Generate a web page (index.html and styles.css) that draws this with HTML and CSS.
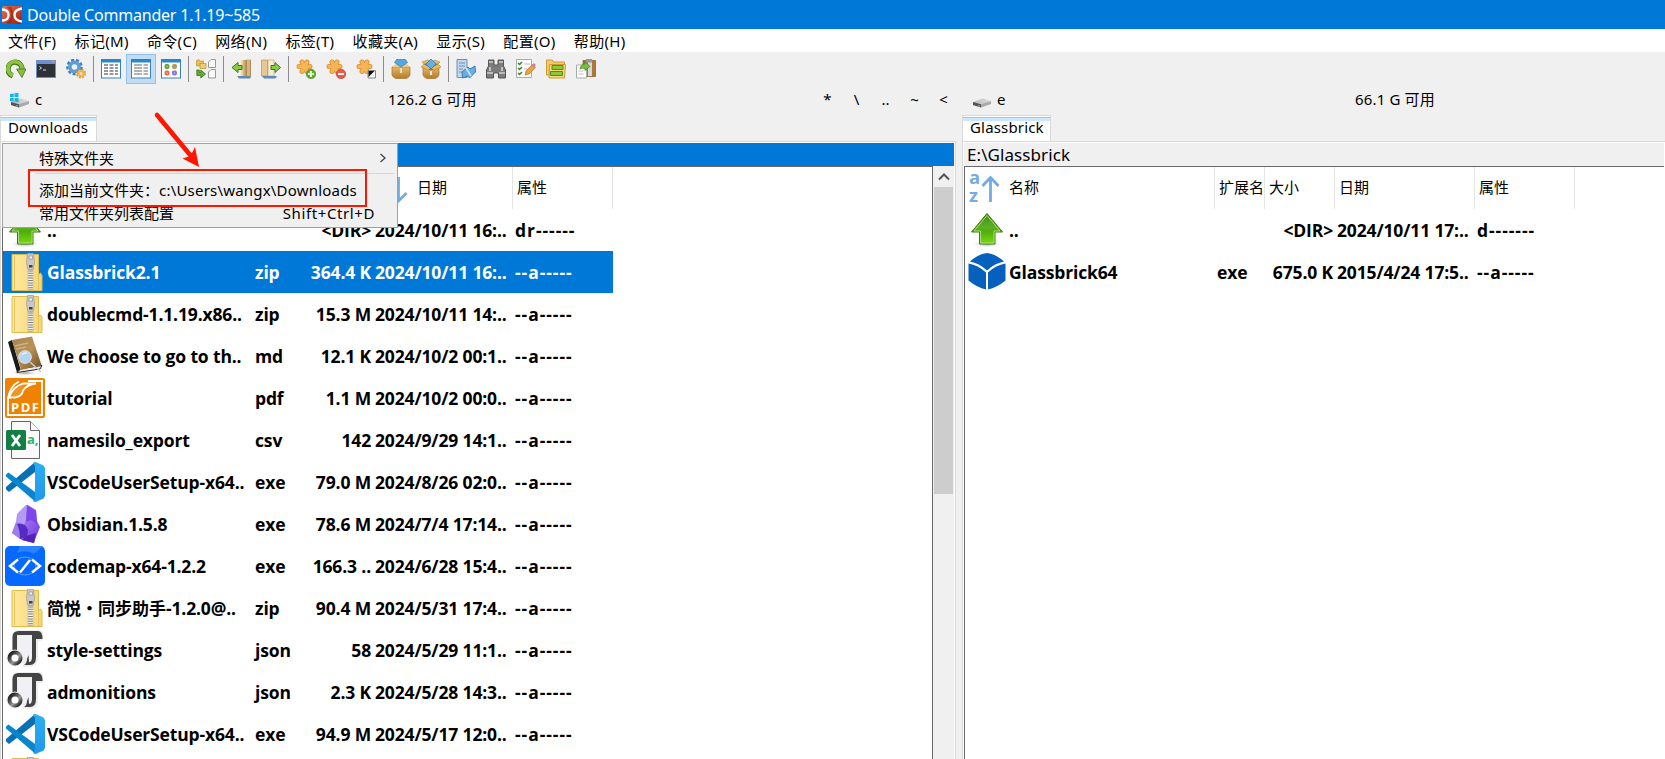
FILE: index.html
```html
<!DOCTYPE html>
<html lang="zh-CN">
<head>
<meta charset="utf-8">
<title>Double Commander 1.1.19~585</title>
<link rel="stylesheet" href="styles.css">
</head>
<body>
<svg class="defs" aria-hidden="true">
  <defs>
    <linearGradient id="gUp" x1="0" y1="0" x2="0" y2="1"><stop offset="0" stop-color="#3f8f08"/><stop offset=".45" stop-color="#5fae28"/><stop offset=".6" stop-color="#4fae0a"/><stop offset="1" stop-color="#7ada10"/></linearGradient>
    <linearGradient id="gLogo" x1="0" y1="0" x2="1" y2="1"><stop offset="0" stop-color="#e4735a"/><stop offset="1" stop-color="#a81808"/></linearGradient>
    <linearGradient id="gZip" x1="0" y1="0" x2="1" y2="0"><stop offset="0" stop-color="#ffe9a0"/><stop offset="1" stop-color="#f6d673"/></linearGradient>
    <linearGradient id="gBook" x1="0" y1="0" x2="1" y2="1"><stop offset="0" stop-color="#a8834c"/><stop offset=".5" stop-color="#b89358"/><stop offset="1" stop-color="#6f4e20"/></linearGradient>
    <linearGradient id="gObs" x1="0" y1="0" x2="1" y2="1"><stop offset="0" stop-color="#c0a8f8"/><stop offset="1" stop-color="#6c31e3"/></linearGradient>
    <linearGradient id="gVs" x1="0" y1="0" x2="0" y2="1"><stop offset="0" stop-color="#2bb0f2"/><stop offset="1" stop-color="#2196ea"/></linearGradient>
    <linearGradient id="gDisk" x1="0" y1="0" x2="1" y2="0"><stop offset="0" stop-color="#b8b8b8"/><stop offset="1" stop-color="#dedede"/></linearGradient>
    <linearGradient id="gBox" x1="0" y1="0" x2="0" y2="1"><stop offset="0" stop-color="#e6b868"/><stop offset="1" stop-color="#b47a28"/></linearGradient>
    <linearGradient id="gBind" x1="0" y1="0" x2="1" y2="0"><stop offset="0" stop-color="#fff3d8"/><stop offset="1" stop-color="#b98f52"/></linearGradient>
    <linearGradient id="gRing" x1="0" y1="0" x2="1" y2="1"><stop offset="0" stop-color="#111"/><stop offset=".35" stop-color="#555"/><stop offset=".6" stop-color="#999"/><stop offset="1" stop-color="#111"/></linearGradient>
    <radialGradient id="gShade"><stop offset="0" stop-color="#999"/><stop offset="1" stop-color="#fff" stop-opacity="0"/></radialGradient>

    <symbol id="zip" viewBox="0 0 40 40">
      <path d="M7 2.500h26.500v20l2 -1.500 1.500 2.500v15H7z" fill="url(#gZip)" stroke="#e0bb48"/>
      <path d="M33.500 23v15M9.500 4v33" stroke="#e9c65c" fill="none"/>
      <path d="M22.500 3h6v35h-6z" fill="#e2c070"/>
      <path d="M25.500 16v22" stroke="#f4f4f4" stroke-width="4.500"/>
      <path d="M25.500 16v22" stroke="#777" stroke-width="4.500" stroke-dasharray="1 1.400"/>
      <path d="M22.500 1.500h6l1 9-1.500 7h-5l-1.500-7z" fill="#c8c8c8" stroke="#999" stroke-width=".7"/>
      <path d="M24 4h3.500v3H24z" fill="#eee" stroke="#888" stroke-width=".6"/><path d="M24 13h3.500v2.500H24z" fill="#444"/>
    </symbol>
    <symbol id="book" viewBox="0 0 40 40">
      <ellipse cx="20" cy="37" rx="16" ry="3" fill="url(#gShade)"/>
      <path d="M3 6l4-2 9 31-4 1.500z" fill="#1d1a19"/>
      <path d="M12 36.500l4-4 21-3-2 3.500z" fill="#eee" stroke="#2a2117"/>
      <path d="M7 4l20-3.500L36.500 29 16 34z" fill="url(#gBook)"/>
      <path d="M10 10l13-3M11 13l10-2" stroke="#cdb28a" stroke-width="1.500"/>
      <circle cx="20" cy="21" r="6.300" fill="#b5d5f5" stroke="#dfe7ee"/>
      <path d="M25 26l11 10" stroke="#c8c8c8" stroke-width="1.600"/><path d="M16 19q2-4 7-2z" fill="#edf6ff"/>
    </symbol>
    <symbol id="pdf" viewBox="0 0 40 40">
      <rect width="40" height="40" rx="2" fill="#ef8200"/>
      <path d="M23 3h14v34H3V20Q5 8 14 3.500M10 19.500q7-1 8-7 4-6 13-7H18Q7 9 4 20q2-1 6-.5z" fill="none" stroke="#fff" stroke-width="1.800"/>
      <path d="M4 21Q7 10 18 5l3-1-4 8q-1 7-13 9z" fill="#fff" opacity=".15"/>
      <text x="6" y="33.500" class="pdf-label" textLength="28">PDF</text>
    </symbol>
    <symbol id="csv" viewBox="0 0 40 40">
      <path d="M6.500 1.500H25.500l9 9v28H6.500z" fill="#fafafa" stroke="#666"/>
      <path d="M25.500 1.500v9h9" fill="#fff" stroke="#666"/>
      <rect x="1" y="10" width="20" height="20" rx="1.500" fill="#128045"/>
      <path d="M7 15l8 11M15 15L7 26" stroke="#fff" stroke-width="2.800"/>
      <text x="22" y="24" class="csv-label">a,</text>
    </symbol>
    <symbol id="vscode" viewBox="0 0 40 40">
      <path d="M1 27.500l3 2.500 26-20V0L1 25z" fill="#0670b4"/>
      <path d="M1 14.500L1 12.500 3.500 10.500 30 30v9.500z" fill="#0a86d0"/>
      <path d="M28 .8L30.500 0 38.500 3.500 40 6v28l-1.500 2.500-8 3.500-2.500-.8 2-3V4z" fill="url(#gVs)"/>
    </symbol>
    <symbol id="obsidian" viewBox="0 0 40 40">
      <path d="M18 4l3-3 2 0 8 5 1 11 3 6-4 10-2 6-12-3-10-7 4-10 1-9z" fill="url(#gObs)"/>
      <path d="M18 4l4-3-1 15-2 5-7-2 .5-9z" fill="#b49af5"/>
      <path d="M22 1l9 6 1 13-6-4-5 2z" fill="#7c46e9"/>
      <path d="M11 20q9-2 12 6l-1 7-7 2-4-7z" fill="#562bc4"/>
      <path d="M21 32l10-3-2 10-12-3z" fill="#5523b8"/>
      <path d="M11 18l-4 11 8 6q0-10-4-17z" fill="#9d7df0"/>
    </symbol>
    <symbol id="codemap" viewBox="0 0 40 40">
      <rect width="40" height="40" rx="5" fill="#0569ff"/><path d="M15 0h23l-9 8Q21 3 12 7z" fill="#2b83ff"/>
      <ellipse cx="20" cy="20" rx="11" ry="9" fill="none" stroke="#5b9dff"/>
      <path d="M13 13.500L5 20l8 6.500M27 13.500l8 6.500-8 6.500M25 14L15 26.500" fill="none" stroke="#fff" stroke-width="2.500"/>
    </symbol>
    <symbol id="json" viewBox="0 0 40 40">
      <path d="M10 22V8q0-5 5-5h20v5h-5v20q0 6-5 6H18" fill="#f1f1f5" stroke="#ededed" stroke-width="6" stroke-linejoin="round"/>
      <path d="M7.500 21V7q0-6 6-6H33q4.500 0 4.500 8H31v18q0 8-6 8h-6q3-2 3-6l1.500-4 .5 7q3 0 3-5V5H12v16z" fill="#444"/>
      <circle cx="10" cy="28" r="5.600" fill="#fff" stroke="#eee" stroke-width="6"/>
      <circle cx="10" cy="28" r="5.500" fill="#fff" stroke="url(#gRing)" stroke-width="4"/>
    </symbol>
    <symbol id="up" viewBox="0 0 40 40">
      <ellipse cx="20" cy="34" rx="16" ry="4" fill="url(#gShade)"/>
      <path d="M20 3.500L35.500 22H28v12H12.500V22H4.500z" fill="url(#gUp)" stroke="#3a7d0c"/>
      <path d="M20 5.500L33 21h-6v12H13.500V21H7z" fill="none" stroke="#a9dc7a"/>
    </symbol>
    <symbol id="cube" viewBox="0 0 40 40">
      <path d="M3 9.500Q11 2 20 1q9 1 17 8.500Q28 11 20 18.500 12 11 3 9.500z" fill="#0560be"/>
      <path d="M1.500 11.500Q11 13 19 20.500V37.500q-9-2-17.500-9zM38.500 11.500Q29 13 21 20.500V37.500q9-2 17.500-9z" fill="#0560be"/>
    </symbol>
    <symbol id="sortup" viewBox="0 0 40 40"><text x="4" y="15.500" class="sort-label">a</text><text x="4" y="33.500" class="sort-label">z</text><path d="M25.500 34V10M17.500 18l8-8.500 8 8.500" fill="none" stroke="#77abdf" stroke-width="2.800"/></symbol>
    <symbol id="sortdown" viewBox="0 0 40 40"><path d="M25.500 9v24M17.500 25l8 8 8-8" fill="none" stroke="#77abdf" stroke-width="2.800"/></symbol>

    <symbol id="disk" viewBox="0 0 20 16"><path d="M1 10l10-3.500 8 2.500v3L9 15.500 1 13z" fill="url(#gDisk)"/><path d="M1 10l8 2.300V15.500L1 13z" fill="#555"/><path d="M9 12.300L19 9v3L9 15.500z" fill="#aaa"/><path d="M6 13.600l2 .5" stroke="#4ee06a"/></symbol>
    <symbol id="win" viewBox="0 0 20 16"><path d="M0 2l3.700-.6V5H0zM4.500 1.300L8.500.7V5h-4zM0 5.900h3.700v3.600L0 9zM4.500 5.900h4v4.300l-4-.6z" fill="#12b5ef"/></symbol>

    <symbol id="refresh" viewBox="0 0 20 20"><path d="M6.800 16.800A7 7 0 1 1 16 10.500" fill="none" stroke="#44731a" stroke-width="5.400"/><path d="M6.800 16.400A7 7 0 1 1 16 10.500" fill="none" stroke="#8cc43f" stroke-width="3.800"/><path d="M10.500 10h9.500l-4 8.500z" fill="#86c03c" stroke="#44731a" stroke-width=".8"/></symbol>
    <symbol id="term" viewBox="0 0 20 20"><rect y="1" width="20" height="18" fill="#6c8fc7"/><path d="M0 1h20v4H0z" fill="#6d8fca"/><path d="M15 2.500h4" stroke="#e9856b" stroke-width="1.500"/><path d="M1 5h18v13H1z" fill="#2d3138"/><path d="M3.500 7.500l2 1.500-2 1.500M7 11h3" fill="none" stroke="#ddd"/></symbol>
    <symbol id="gears" viewBox="0 0 20 20"><circle cx="8.500" cy="8" r="7" fill="none" stroke="#3f7fbd" stroke-width="2.600" stroke-dasharray="3 1.890"/><circle cx="8.500" cy="8" r="4.600" fill="none" stroke="#5e9dd6" stroke-width="3.600"/><circle cx="15" cy="14.500" r="4" fill="none" stroke="#d8932b" stroke-width="2" stroke-dasharray="1.900 1.240"/><circle cx="15" cy="14.500" r="2.600" fill="#f7e8c5" stroke="#eeb44e" stroke-width="2.200"/></symbol>
    <symbol id="list1" viewBox="0 0 20 20"><rect x=".5" y=".5" width="19" height="18.500" fill="#fff" stroke="#3482bd"/><path d="M1 1h18v2.500H1z" fill="#2788d0"/><path d="M3 6h4M8.500 6h4M14 6h3M3 9h4M8.500 9h4M14 9h3M3 12h4M8.500 12h4M14 12h3M3 15h4M8.500 15h4M14 15h3" stroke="#777" stroke-width="1.300"/></symbol>
    <symbol id="list2" viewBox="0 0 20 20"><rect x=".5" y=".5" width="19" height="18.500" fill="#fff" stroke="#3482bd"/><path d="M1 1h18v2.500H1z" fill="#2788d0"/><path d="M3 6h8M3 9h8M3 12h8M3 15h8M12.500 6H17M12.500 9H17M12.500 12H17M12.500 15H17" stroke="#999" stroke-width="1.300"/></symbol>
    <symbol id="thumbs" viewBox="0 0 20 20"><rect x=".5" y=".5" width="19" height="18.500" fill="#fff" stroke="#3482bd"/><path d="M1 1h18v2.500H1z" fill="#2788d0"/><g stroke-width="1.800"><rect x="4.400" y="5.900" width="3.200" height="3.200" rx="1" fill="#b9d79a" stroke="#5e9e3b"/><rect x="11.900" y="5.900" width="3.200" height="3.200" rx="1" fill="#6e9ce0" stroke="#c09a35"/><rect x="4.400" y="12.400" width="3.200" height="3.200" rx="1" fill="#f6b09a" stroke="#ee6a45"/><rect x="11.900" y="12.400" width="3.200" height="3.200" rx="1" fill="#c7a8f0" stroke="#9070e0"/></g></symbol>
    <symbol id="tree" viewBox="0 0 20 20"><path d="M.5 1.500l2-1 2 1.500h3v5H.5z" fill="#e8be57" stroke="#bd922e" stroke-width=".7"/><path d="M4 4.500h6v5H4z" fill="#efcd72" stroke="#bd922e" stroke-width=".7"/><path d="M.8 11v5.500h4V19l4.700-4L4.800 11v2.500H3.300V11z" fill="#65ad31" stroke="#34751a" stroke-width=".8"/><path d="M12.500 3l2.500-2.500h4.500v8h-7zM12.500 13l2.500-2.500h4.500v8.500h-7z" fill="#f8f8f8" stroke="#999"/></symbol>
    <symbol id="binder" viewBox="0 0 20 20"><path d="M9 1h6v16H9z" fill="url(#gBind)"/><path d="M15 .5h5V18h-5z" fill="#d3b587"/><path d="M15.500 1v16M19.500 1v16" stroke="#b08a50"/><path d="M6 17h13l1 1-1 1.500H8z" fill="#6189b5"/></symbol>
    <symbol id="left" viewBox="0 0 20 20"><use href="#binder"/><path d="M1 8.500L7 3.500V6.500h4v4H7v3z" fill="#8acb49" stroke="#3c771c"/></symbol>
    <symbol id="right" viewBox="0 0 20 20"><path d="M.5 1h6v16h-6z" fill="#e7c893" stroke="#b98f52" stroke-width=".7"/><path d="M7 1h6v16H7z" fill="#f7ecd4" stroke="#c9a870" stroke-width=".7"/><path d="M1 17h14l1 1-2 1.500H3z" fill="#6189b5"/><path d="M19.500 8.500L14 3.500V6.500h-4v4h4v3z" fill="#8acb49" stroke="#3c771c"/></symbol>
    <symbol id="star" viewBox="0 0 20 20"><g fill="none" stroke="#dd9236" stroke-width="5" stroke-linecap="round"><path d="M3 7.500h11M6 3l5 9.500M11 3l-5 9.500"/></g><g fill="none" stroke="#f5b556" stroke-width="3.400" stroke-linecap="round"><path d="M3 7.500h11M6 3l5 9.500M11 3l-5 9.500"/></g></symbol>
    <symbol id="add" viewBox="0 0 20 20"><use href="#star"/><circle cx="15" cy="15" r="4.700" fill="#63ac2b" stroke="#478a18" stroke-width=".7"/><path d="M12 15h6M15 12v6" stroke="#fff" stroke-width="1.700"/></symbol>
    <symbol id="minus" viewBox="0 0 20 20"><use href="#star"/><circle cx="15" cy="15" r="4.700" fill="#e85a48" stroke="#c5382c" stroke-width=".7"/><path d="M12 15h6" stroke="#fff" stroke-width="1.900"/></symbol>
    <symbol id="invert" viewBox="0 0 20 20"><use href="#star"/><path d="M12 11.500h7.500v7.500H12z" fill="#f4f4f4" stroke="#888"/><path d="M12.500 12h6l-6 6z" fill="#111"/></symbol>
    <symbol id="pack" viewBox="0 0 20 20"><path d="M1 8h18v8q-1 3-4 3.500H5Q2 19 1 16z" fill="url(#gBox)" stroke="#a8772f" stroke-width=".7"/><path d="M1 8l4-3h11l3 3" fill="#efcb8b"/><path d="M10 9v5" stroke="#e9ddc4" stroke-width="2"/><path d="M10 8L3.500 3.500 6 0h8l2.500 3.500z" fill="#55a7df" stroke="#317bb4" stroke-width=".7"/></symbol>
    <symbol id="unpack" viewBox="0 0 20 20"><path d="M2 8h16v8q-1 3-4 3.500H6Q3 19 2 16z" fill="url(#gBox)" stroke="#a8772f" stroke-width=".7"/><path d="M3 5l7-2 7 2v4l-7 2-7-2z" fill="#8c5f22"/><path d="M3 5L0 8l7 3 3-2zM17 5l3 3-7 3-3-2zM3 5L1 3l6-2 3 2zM17 5l2-2-6-2-3 2z" fill="#e6b868" stroke="#a8772f" stroke-width=".5"/><path d="M10 0l5 5-5 5-5-5z" fill="#62b0e5" stroke="#317bb4" stroke-width=".7"/><path d="M10 12v4" stroke="#eee" stroke-width="2"/></symbol>
    <symbol id="doc" viewBox="0 0 20 20"><path d="M1 .5h10v18H1z" fill="#c3d5e8" stroke="#6f91b7"/><path d="M3 4h6M3 7h6M3 10h4M3 13h3" stroke="#7194bb" stroke-width="1.200"/><path d="M6 13l6-5 2 2 5-3 .5 6-6 6-2-2-5 2z" fill="#69aee5" stroke="#367abb"/><path d="M10 9l5 8" stroke="#d5e9fa" stroke-width="1.500"/></symbol>
    <symbol id="bino" viewBox="0 0 20 20"><path d="M2.500 1H8v5h4V1h5.500v6l2 4v8h-7v-5h-5v5h-7v-8l2-4z" fill="#7b7b7b" stroke="#555"/><path d="M3 3h4M13 3h4M1 14h6M13 14h6M4 8v4M16 8v4" stroke="#d0d0d0" stroke-width="1.700"/></symbol>
    <symbol id="check" viewBox="0 0 20 20"><path d="M.5.500h15v18H.5z" fill="#fff" stroke="#aaa"/><path d="M2 4l1.500 1.500L6 3M2 9l1.500 1.500L6 8M2 14l1.500 1.500L6 13" fill="none" stroke="#38852a" stroke-width="1.500"/><path d="M8 5h6M8 10h3" stroke="#bbb"/><path d="M9 16l1-4 6.500-6.500 3 3L13 15z" fill="#eda33c" stroke="#b37022" stroke-width=".7"/><path d="M15.500 6.500L18 4l2 2-2.500 2.500z" fill="#cc80b8"/></symbol>
    <symbol id="folder" viewBox="0 0 20 20"><path d="M.5 1h6l1 2h11v13H.5z" fill="#f0ca6c" stroke="#d09a32"/><path d="M3.500 5.500h16l-1 13.500H3z" fill="#f6d884" stroke="#d09a32"/><path d="M6 6.500h11v4H6zM4.500 12.500h12v4h-12z" fill="#8cc832" stroke="#4f8f1d"/></symbol>
    <symbol id="paste" viewBox="0 0 20 20"><path d="M7 1.500h12.500v16H7z" fill="#ae783d" stroke="#865624" stroke-width=".7"/><path d="M12 2h4v15h-4z" fill="#d8d8d8"/><path d="M10 0h6v3.500h-6z" fill="#999"/><path d="M.5 6h10v13H.5z" fill="#fff" stroke="#aaa"/><path d="M2.500 12h5M2.500 15h5" stroke="#bbb"/><path d="M4 10q1-5 5-5V2.500l5 5-5 4V9.500q-3-1-5 .5z" fill="#79bf37" stroke="#3d8018" stroke-width=".7"/></symbol>
  </defs>
</svg>

<header class="titlebar">
  <svg class="logo" viewBox="0 0 20 18"><rect width="20" height="18" rx="2" fill="url(#gLogo)"/><path d="M9.500 1Q6 0 4.500 1 9 4 9 9t-4.500 8q2 1 5 0Q11 13 11 9T9.500 1z" fill="#8f1e10" opacity=".55"/><path d="M0 3.500q6.500 0 6.500 5.500T0 14.500M20 2.500q-7.500 1-7.500 6.500t7.500 6.500" fill="none" stroke="#fff" stroke-width="2.300"/></svg>
  <span class="title-text">Double Commander 1.1.19~585</span>
</header>
<nav class="menubar"><span>文件(F)</span><span>标记(M)</span><span>命令(C)</span><span>网络(N)</span><span>标签(T)</span><span>收藏夹(A)</span><span>显示(S)</span><span>配置(O)</span><span>帮助(H)</span></nav>
<div class="toolbar">
  <svg class="tool"><use href="#refresh"/></svg><svg class="tool"><use href="#term"/></svg><svg class="tool"><use href="#gears"/></svg><i class="sep"></i>
  <svg class="tool"><use href="#list1"/></svg><svg class="tool active"><use href="#list2"/></svg><svg class="tool"><use href="#thumbs"/></svg><i class="sep"></i>
  <svg class="tool"><use href="#tree"/></svg><i class="sep"></i>
  <svg class="tool"><use href="#left"/></svg><svg class="tool"><use href="#right"/></svg><i class="sep"></i>
  <svg class="tool"><use href="#add"/></svg><svg class="tool"><use href="#minus"/></svg><svg class="tool"><use href="#invert"/></svg><i class="sep"></i>
  <svg class="tool"><use href="#pack"/></svg><svg class="tool"><use href="#unpack"/></svg><i class="sep"></i>
  <svg class="tool"><use href="#doc"/></svg><svg class="tool"><use href="#bino"/></svg><svg class="tool"><use href="#check"/></svg><svg class="tool"><use href="#folder"/></svg><svg class="tool"><use href="#paste"/></svg>
</div>

<main class="panels">
  <section class="panel panel-left">
    <div class="drivebar">
      <svg class="drive" viewBox="0 0 20 16"><use href="#disk"/><use href="#win"/></svg><span class="letter">c</span>
      <span class="free">126.2 G 可用</span>
      <span class="quick"><b>*</b><b>\</b><b>..</b><b>~</b><b>&lt;</b></span>
    </div>
    <div class="tabs"><span class="tab">Downloads</span></div>
    <div class="page">
      <div class="path path-active"></div>
      <div class="listwrap">
        <div class="list">
          <div class="row head"><span class="name"></span><span class="ext"></span><span class="size"></span><span class="date sorted"><svg class="icon"><use href="#sortdown"/></svg>日期</span><span class="attr">属性</span></div>
          <div class="row"><span class="name"><svg class="icon"><use href="#up"/></svg>..</span><span class="ext"></span><span class="size">&lt;DIR&gt;</span><span class="date">2024/10/11 16:..</span><span class="attr">dr------</span></div>
          <div class="row selected"><span class="name"><svg class="icon"><use href="#zip"/></svg>Glassbrick2.1</span><span class="ext">zip</span><span class="size">364.4 K</span><span class="date">2024/10/11 16:..</span><span class="attr">--a-----</span></div>
          <div class="row"><span class="name"><svg class="icon"><use href="#zip"/></svg>doublecmd-1.1.19.x86..</span><span class="ext">zip</span><span class="size">15.3 M</span><span class="date">2024/10/11 14:..</span><span class="attr">--a-----</span></div>
          <div class="row"><span class="name"><svg class="icon"><use href="#book"/></svg>We choose to go to th..</span><span class="ext">md</span><span class="size">12.1 K</span><span class="date">2024/10/2 00:1..</span><span class="attr">--a-----</span></div>
          <div class="row"><span class="name"><svg class="icon"><use href="#pdf"/></svg>tutorial</span><span class="ext">pdf</span><span class="size">1.1 M</span><span class="date">2024/10/2 00:0..</span><span class="attr">--a-----</span></div>
          <div class="row"><span class="name"><svg class="icon"><use href="#csv"/></svg>namesilo_export</span><span class="ext">csv</span><span class="size">142</span><span class="date">2024/9/29 14:1..</span><span class="attr">--a-----</span></div>
          <div class="row"><span class="name"><svg class="icon"><use href="#vscode"/></svg>VSCodeUserSetup-x64..</span><span class="ext">exe</span><span class="size">79.0 M</span><span class="date">2024/8/26 02:0..</span><span class="attr">--a-----</span></div>
          <div class="row"><span class="name"><svg class="icon"><use href="#obsidian"/></svg>Obsidian.1.5.8</span><span class="ext">exe</span><span class="size">78.6 M</span><span class="date">2024/7/4 17:14..</span><span class="attr">--a-----</span></div>
          <div class="row"><span class="name"><svg class="icon"><use href="#codemap"/></svg>codemap-x64-1.2.2</span><span class="ext">exe</span><span class="size">166.3 ..</span><span class="date">2024/6/28 15:4..</span><span class="attr">--a-----</span></div>
          <div class="row"><span class="name"><svg class="icon"><use href="#zip"/></svg><span class="cjk">简悦・同步助手</span>-1.2.0@..</span><span class="ext">zip</span><span class="size">90.4 M</span><span class="date">2024/5/31 17:4..</span><span class="attr">--a-----</span></div>
          <div class="row"><span class="name"><svg class="icon"><use href="#json"/></svg>style-settings</span><span class="ext">json</span><span class="size">58</span><span class="date">2024/5/29 11:1..</span><span class="attr">--a-----</span></div>
          <div class="row"><span class="name"><svg class="icon"><use href="#json"/></svg>admonitions</span><span class="ext">json</span><span class="size">2.3 K</span><span class="date">2024/5/28 14:3..</span><span class="attr">--a-----</span></div>
          <div class="row"><span class="name"><svg class="icon"><use href="#vscode"/></svg>VSCodeUserSetup-x64..</span><span class="ext">exe</span><span class="size">94.9 M</span><span class="date">2024/5/17 12:0..</span><span class="attr">--a-----</span></div>
          <div class="row"><span class="name"><svg class="icon"><use href="#zip"/></svg></span></div>
        </div>
        <div class="scrollbar"><svg class="scroll-up" viewBox="0 0 20 20"><path d="M5 13l5-5 5 5" fill="none" stroke="#555" stroke-width="2"/></svg><div class="thumb"></div></div>
      </div>
    </div>
  </section>
  <section class="panel panel-right">
    <div class="drivebar">
      <svg class="drive" viewBox="0 0 20 16"><use href="#disk"/></svg><span class="letter">e</span>
      <span class="free">66.1 G 可用</span>
    </div>
    <div class="tabs"><span class="tab">Glassbrick</span></div>
    <div class="page">
      <div class="path">E:\Glassbrick</div>
      <div class="listwrap">
        <div class="list">
          <div class="row head"><span class="name sorted"><svg class="icon"><use href="#sortup"/></svg>名称</span><span class="ext">扩展名</span><span class="size">大小</span><span class="date">日期</span><span class="attr">属性</span></div>
          <div class="row"><span class="name"><svg class="icon"><use href="#up"/></svg>..</span><span class="ext"></span><span class="size">&lt;DIR&gt;</span><span class="date">2024/10/11 17:..</span><span class="attr">d-------</span></div>
          <div class="row"><span class="name"><svg class="icon"><use href="#cube"/></svg>Glassbrick64</span><span class="ext">exe</span><span class="size">675.0 K</span><span class="date">2015/4/24 17:5..</span><span class="attr">--a-----</span></div>
        </div>
      </div>
    </div>
  </section>
</main>

<div class="popup">
  <div class="item">特殊文件夹<svg class="chev" viewBox="0 0 8 10"><path d="M1.500 1L6 5 1.500 9" fill="none" stroke="#444" stroke-width="1.300"/></svg></div>
  <div class="rule"></div>
  <div class="item item-add"><span>添加当前文件夹：</span><span class="item-path">c:\Users\wangx\Downloads</span></div>
  <div class="item item-config"><span>常用文件夹列表配置</span><span class="shortcut">Shift+Ctrl+D</span></div>
</div>
<div class="callout"></div>
<svg class="arrow" viewBox="0 0 60 60"><path d="M6 5L40 46" stroke="#ff1500" stroke-width="4.600" stroke-linecap="round"/><path d="M48 57l-16.500-8.500 8-2.500 4.500-9z" fill="#ff1500"/></svg>
</body>
</html>
```
FILE: styles.css
```css
* { box-sizing: border-box; }
body {
  margin: 0;
  width: 1665px;
  height: 759px;
  overflow: hidden;
  position: relative;
  display: flex;
  flex-direction: column;
  background: #f0f0f0;
  color: #000;
  font: 15px/20px "Noto Sans", "Noto Sans CJK SC", sans-serif;
}
.defs { position: absolute; width: 0; height: 0; }

.titlebar {
  height: 29px;
  flex: none;
  display: flex;
  align-items: center;
  gap: 5px;
  padding-left: 2px;
  background: #0078d7;
  color: #fff;
}
.logo { width: 20px; height: 18px; }
.title-text { font-size: 16px; letter-spacing: -.2px; }

.menubar {
  height: 23px;
  flex: none;
  display: flex;
  align-items: center;
  gap: 18.2px;
  padding-left: 8px;
  letter-spacing: .32px;
  background: #fff;
}

.toolbar {
  height: 33px;
  flex: none;
  display: flex;
  padding: 2px 0 0 1px;
}
.tool { width: 30px; height: 30px; padding: 4px; border: 1px solid transparent; }
.tool.active { background: #c2dcf3; border-color: #90c2ee; }
.sep { width: 3px; height: 26px; margin: 2px 0 0 2px; border-left: 1px solid #8c8c8c; }

.panels { flex: 1; min-height: 0; display: flex; gap: 6px; }
.panel { display: flex; flex-direction: column; min-width: 0; }
.panel-left { width: 956px; flex: none; }
.panel-right { flex: 1; }
.drivebar { height: 30px; flex: none; display: flex; align-items: center; padding: 0 0 2px 10px; }
.drive { width: 20px; height: 16px; margin-top: 2px; }
.letter { width: 30px; padding-left: 5px; }
.free { flex: none; letter-spacing: .15px; }
.panel-left .free { margin-left: 328px; }
.panel-right .free { margin-left: 333px; }
.quick { margin-left: auto; display: flex; margin-right: -2px; }
.quick b { width: 29px; text-align: center; font-weight: 400; }

.tabs { height: 27px; flex: none; display: flex; border-bottom: 1px solid #d9d9d9; }
.tab {
  height: 27px;
  padding: 1px 7px 0;
  border: 1px solid #d9d9d9;
  border-bottom: 0;
  background: linear-gradient(#fff 0 1px, #91c9f7 1px 2px, #cce8ff 2px 5px, #fff 5px);
  letter-spacing: .17px;
}
.panel-left .tab { width: 97px; }
.panel-right .tab { width: 89px; }

.page {
  flex: 1;
  min-height: 0;
  display: flex;
  flex-direction: column;
  border: 1px solid #fff;
  border-bottom: 0;
  outline: 1px solid #d9d9d9;
}
.panel-left .page { margin: 0 1px; }
.panel-right .page { margin-left: 1px; }
.path { height: 23px; flex: none; padding-left: 3px; font-size: 17px; line-height: 23px; letter-spacing: .08px; }
.path-active { background: #0078d7; }
.listwrap { flex: 1; min-height: 0; display: flex; }
.list {
  flex: 1;
  overflow: hidden;
  background: #fff;
  border-top: 1px solid #696969;
  border-left: 1px solid #696969;
}
.panel-left .list { border-right: 1px solid #696969; }
.scrollbar { width: 21px; display: flex; flex-direction: column; padding-left: 1px; border-right: 1px solid #f0f0f0; }
.scroll-up { width: 20px; height: 21px; flex: none; }
.thumb { height: 307px; background: #cdcdcd; }

.row {
  height: 42px;
  width: 610px;
  display: grid;
  grid-template-columns: 250px 50px 70px 140px 100px;
  font-size: 17.5px;
  font-weight: 700;
  letter-spacing: -.15px;
  font-family: "Open Sans", "Noto Sans", "Noto Sans CJK SC", sans-serif;
}
.row > span { display: flex; align-items: center; white-space: pre; padding: 0 0 1px 2px; }
.row > .size { justify-content: flex-end; padding: 0 2px 1px 0; }
.row > .attr { letter-spacing: .95px; }
.row.selected { background: #0078d7; color: #fff; }
.row .icon { width: 40px; height: 40px; margin: 1px 2px 0 0; flex: none; }
.cjk { font-family: "Noto Sans CJK SC", sans-serif; font-size: 17px; letter-spacing: 0; }
.row.head { font: 15px/20px "Noto Sans", "Noto Sans CJK SC", sans-serif; letter-spacing: 0; }
.row.head > span { border-right: 1px solid #e5e5e5; padding: 0 3px 2px 4px; justify-content: flex-start; letter-spacing: 0; overflow: hidden; }
.row.head > .sorted { padding-left: 0; }
.row.head .icon { margin: 2px 4px 0 0; }

.popup {
  position: absolute;
  left: 2px;
  top: 143px;
  width: 396px;
  height: 85px;
  padding: 2px;
  background: #f0f0f0;
  border: 1px solid #a0a0a0;
}
.item { height: 24px; display: flex; align-items: center; padding: 0 8px 0 34px; justify-content: space-between; white-space: nowrap; }
.chev { width: 8px; height: 10px; }
.rule { height: 1px; margin: 3px 0 3px 30px; background: #d7d7d7; }
.item-add { justify-content: flex-start; height: 25px; }
.item-path { letter-spacing: .2px; }
.item-config { height: 22px; padding-right: 20px; }
.shortcut { letter-spacing: .6px; }
.callout { position: absolute; left: 28px; top: 169px; width: 339px; height: 38px; border: 2px solid #ff1500; }
.arrow { position: absolute; left: 151px; top: 110px; width: 60px; height: 60px; }

.pdf-label { font: 700 13px "Open Sans", sans-serif; letter-spacing: 0; fill: #fff; }
.csv-label { font: 700 13px "Open Sans", sans-serif; letter-spacing: 0; fill: #2fb36d; }
.sort-label { font: 700 18.500px "Open Sans", sans-serif; letter-spacing: 0; fill: #77abdf; }
```
